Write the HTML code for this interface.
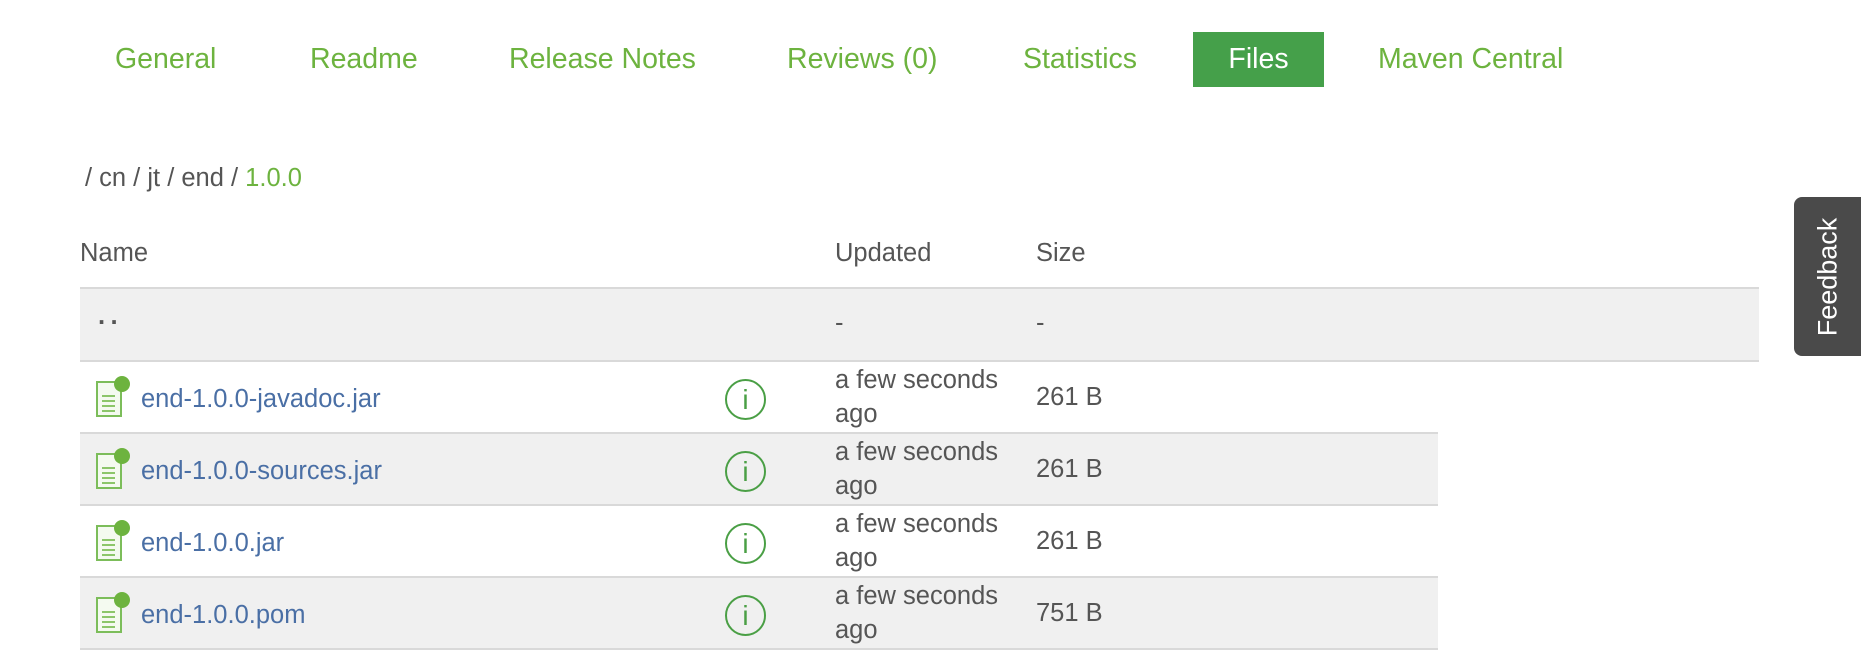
<!DOCTYPE html>
<html><head><meta charset="utf-8"><style>
body{margin:0;width:1861px;height:667px;background:#fff;font-family:"Liberation Sans",sans-serif;color:#555;position:relative;overflow:hidden}
.a{position:absolute;white-space:nowrap}
.tab{position:absolute;top:40px;font-size:28.5px;color:#6db33f;line-height:38px}
.files{position:absolute;left:1193px;top:32px;width:131px;height:55px;background:#45a04a;color:#fff;font-size:28.5px;line-height:55px;text-align:center}
.row{position:absolute;left:80px;border-bottom:2px solid #d9d9d9}
.t{font-size:25.5px;color:#555}
.link{font-size:25.5px;color:#4a6fa5}
.info{position:absolute;left:725px;width:37px;height:37px;border:2px solid #4a9f45;border-radius:50%;color:#4a9f45;font-size:28px;text-align:center;line-height:37px}
</style></head><body>
<div class="tab" style="left:115px">General</div>
<div class="tab" style="left:310px">Readme</div>
<div class="tab" style="left:509px">Release Notes</div>
<div class="tab" style="left:787px">Reviews (0)</div>
<div class="tab" style="left:1023px">Statistics</div>
<div class="files">Files</div>
<div class="tab" style="left:1378px">Maven Central</div>

<div class="a t" style="left:85px;top:164px">/ cn / jt / end / <span style="color:#6db33f">1.0.0</span></div>

<div class="a t" style="left:80px;top:239px">Name</div>
<div class="a t" style="left:835px;top:239px">Updated</div>
<div class="a t" style="left:1036px;top:239px">Size</div>

<div class="row" style="top:287px;width:1679px;border-top:2px solid #d9d9d9;background:#f0f0f0;height:71px"></div>
<div class="a t" style="left:98px;top:309px;letter-spacing:4px;font-weight:bold">··</div>
<div class="a t" style="left:835px;top:309px">-</div>
<div class="a t" style="left:1036px;top:309px">-</div>

<div class="row" style="top:362px;width:1358px;height:70px;background:#fff"></div>
<div class="row" style="top:434px;width:1358px;height:70px;background:#f0f0f0"></div>
<div class="row" style="top:506px;width:1358px;height:70px;background:#fff"></div>
<div class="row" style="top:578px;width:1358px;height:70px;background:#f0f0f0"></div>

<svg class="a" style="left:95px;top:376px" width="40" height="44" viewBox="0 0 40 44"><rect x="2" y="6" width="24" height="34" fill="#f4faf0" stroke="#7cbd5a" stroke-width="2"/><g stroke="#8cc66a" stroke-width="2"><line x1="7" y1="20" x2="20" y2="20"/><line x1="7" y1="25" x2="20" y2="25"/><line x1="7" y1="30" x2="20" y2="30"/><line x1="7" y1="35" x2="20" y2="35"/></g><circle cx="27" cy="8" r="8" fill="#6db33f"/></svg>
<div class="a link" style="left:141px;top:385px">end-1.0.0-javadoc.jar</div>
<div class="info" style="top:379px">i</div>
<div class="a t" style="left:835px;top:363px;line-height:34px">a few seconds<br>ago</div>
<div class="a t" style="left:1036px;top:383px">261 B</div>

<svg class="a" style="left:95px;top:448px" width="40" height="44" viewBox="0 0 40 44"><rect x="2" y="6" width="24" height="34" fill="#f4faf0" stroke="#7cbd5a" stroke-width="2"/><g stroke="#8cc66a" stroke-width="2"><line x1="7" y1="20" x2="20" y2="20"/><line x1="7" y1="25" x2="20" y2="25"/><line x1="7" y1="30" x2="20" y2="30"/><line x1="7" y1="35" x2="20" y2="35"/></g><circle cx="27" cy="8" r="8" fill="#6db33f"/></svg>
<div class="a link" style="left:141px;top:457px">end-1.0.0-sources.jar</div>
<div class="info" style="top:451px">i</div>
<div class="a t" style="left:835px;top:435px;line-height:34px">a few seconds<br>ago</div>
<div class="a t" style="left:1036px;top:455px">261 B</div>

<svg class="a" style="left:95px;top:520px" width="40" height="44" viewBox="0 0 40 44"><rect x="2" y="6" width="24" height="34" fill="#f4faf0" stroke="#7cbd5a" stroke-width="2"/><g stroke="#8cc66a" stroke-width="2"><line x1="7" y1="20" x2="20" y2="20"/><line x1="7" y1="25" x2="20" y2="25"/><line x1="7" y1="30" x2="20" y2="30"/><line x1="7" y1="35" x2="20" y2="35"/></g><circle cx="27" cy="8" r="8" fill="#6db33f"/></svg>
<div class="a link" style="left:141px;top:529px">end-1.0.0.jar</div>
<div class="info" style="top:523px">i</div>
<div class="a t" style="left:835px;top:507px;line-height:34px">a few seconds<br>ago</div>
<div class="a t" style="left:1036px;top:527px">261 B</div>

<svg class="a" style="left:95px;top:592px" width="40" height="44" viewBox="0 0 40 44"><rect x="2" y="6" width="24" height="34" fill="#f4faf0" stroke="#7cbd5a" stroke-width="2"/><g stroke="#8cc66a" stroke-width="2"><line x1="7" y1="20" x2="20" y2="20"/><line x1="7" y1="25" x2="20" y2="25"/><line x1="7" y1="30" x2="20" y2="30"/><line x1="7" y1="35" x2="20" y2="35"/></g><circle cx="27" cy="8" r="8" fill="#6db33f"/></svg>
<div class="a link" style="left:141px;top:601px">end-1.0.0.pom</div>
<div class="info" style="top:595px">i</div>
<div class="a t" style="left:835px;top:579px;line-height:34px">a few seconds<br>ago</div>
<div class="a t" style="left:1036px;top:599px">751 B</div>

<div style="position:absolute;left:1794px;top:197px;width:67px;height:159px;background:#4a4a4a;border-radius:8px 0 0 8px"></div>
<div class="a" style="left:1828px;top:277px;transform:translate(-50%,-50%) rotate(-90deg);color:#fff;font-size:27px">Feedback</div>
</body></html>
